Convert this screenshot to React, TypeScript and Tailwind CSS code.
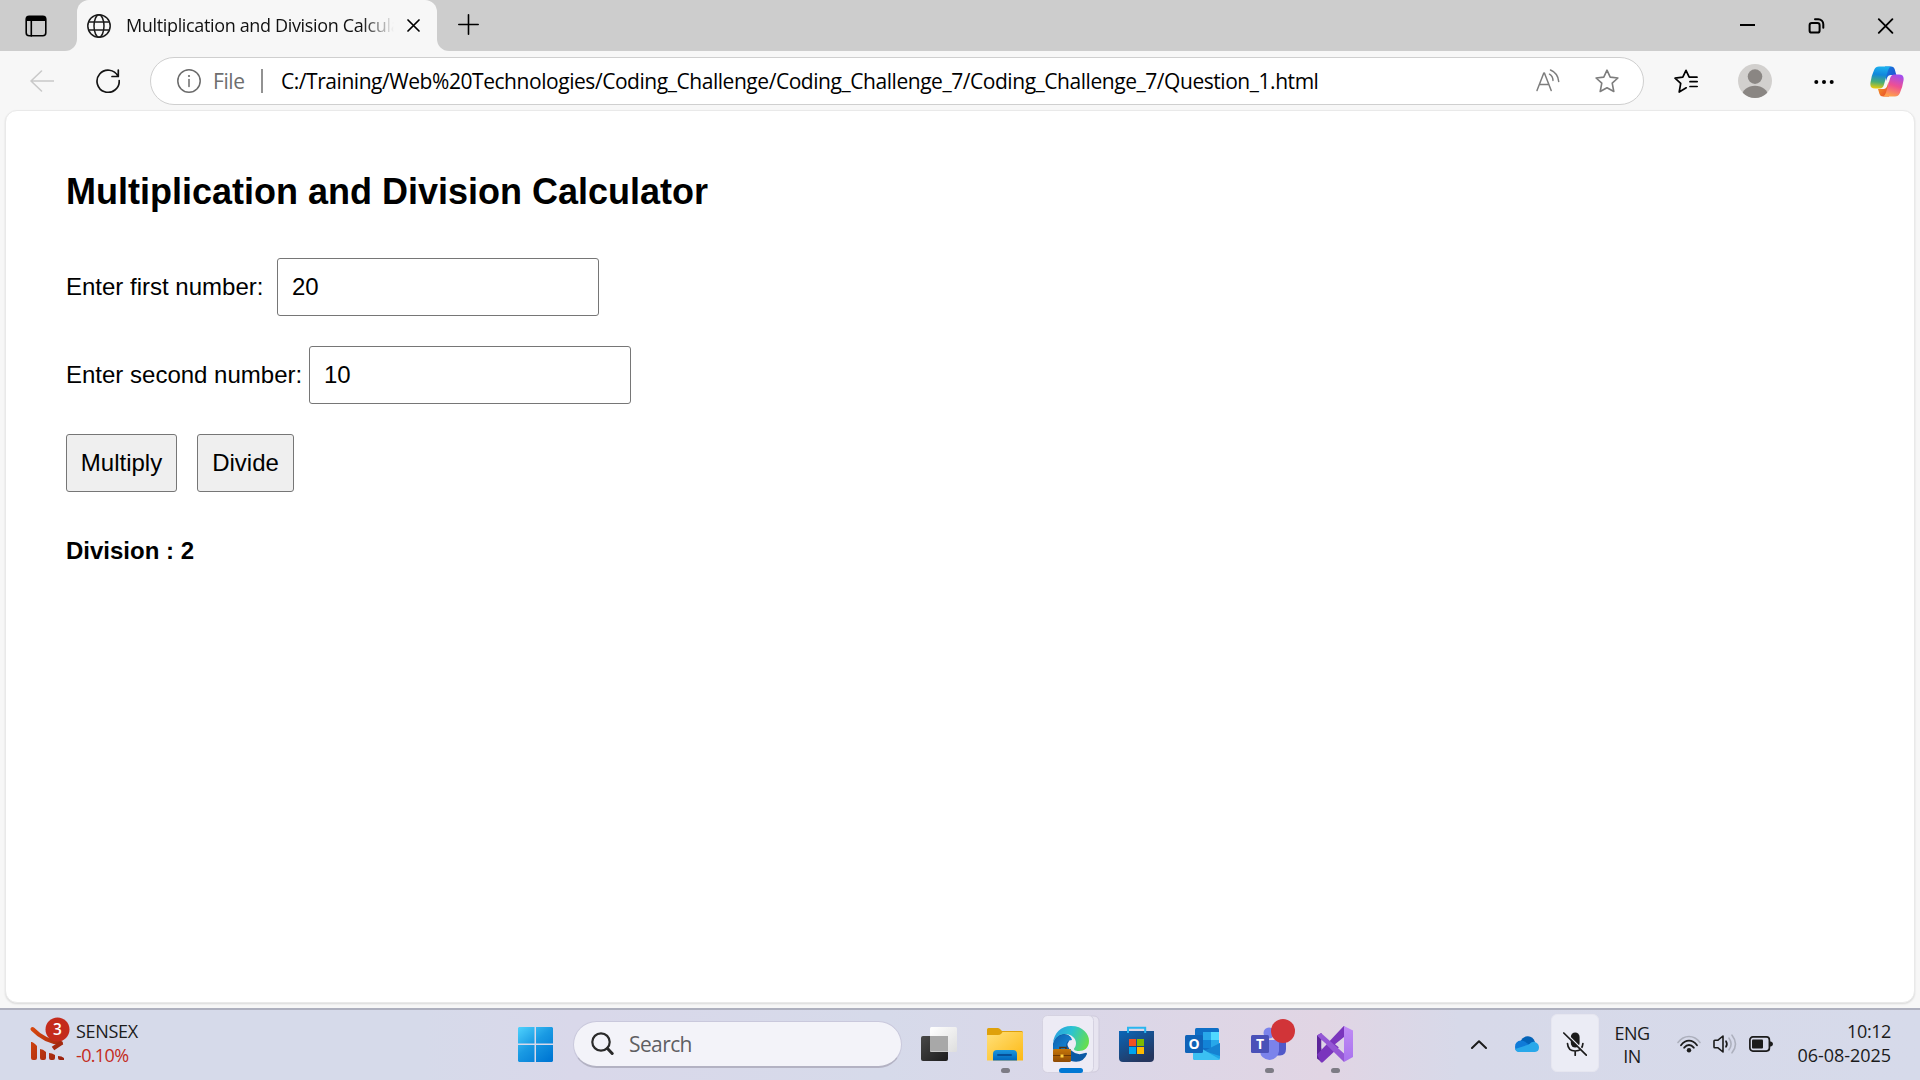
import type { ReactNode } from "react";

const ui = "font-['Open_Sans','Noto_Sans',sans-serif]";

type IconProps = { box: string; w: number; h: number; className?: string; children: ReactNode };

function Icon({ box, w, h, className = "", children }: IconProps) {
  return (
    <svg
      viewBox={box}
      width={w}
      height={h}
      className={`shrink-0 ${className}`}
      fill="none"
      stroke="currentColor"
      strokeLinecap="round"
      strokeLinejoin="round"
    >
      {children}
    </svg>
  );
}

function TabStrip() {
  return (
    <div className="flex h-[51px] shrink-0 bg-[#f7f7f7]">
      <div className="flex w-[77px] items-center rounded-br-xl bg-[#cdcdcd] pl-[25px]">
        <Icon box="0 0 22 22" w={22} h={22} className="text-black">
          <rect x="1.2" y="1.2" width="19.6" height="19.6" rx="3" strokeWidth="1.6" />
          <path d="M1 6V4a3 3 0 0 1 3-3h14a3 3 0 0 1 3 3v2z" fill="black" stroke="none" />
          <path d="M6.3 6v15" strokeWidth="1.6" />
        </Icon>
      </div>
      <div className="w-[360px] bg-[#cdcdcd]">
        <div className="flex h-[51px] items-center rounded-t-xl bg-[#f7f7f7] pl-[10px]">
          <Icon box="0 0 24 24" w={24} h={24} className="text-[#1b1b1b]">
            <g strokeWidth="1.5">
              <circle cx="12" cy="12" r="11.2" />
              <ellipse cx="12" cy="12" rx="5" ry="11.2" />
              <path d="M2 8h20M2 16h20" />
            </g>
          </Icon>
          <div className={`${ui} -mt-px ml-[15px] w-[268px] overflow-hidden bg-[linear-gradient(to_right,#111_88%,#f7f7f7)] bg-clip-text text-[18px] leading-6 tracking-[-0.35px] whitespace-nowrap text-transparent`}>
            Multiplication and Division Calculator
          </div>
          <Icon box="0 0 13 13" w={13} h={13} className="ml-[13px] text-black">
            <path d="M1 1l11 11M12 1L1 12" strokeWidth="1.7" />
          </Icon>
        </div>
      </div>
      <div className="flex flex-1 items-center rounded-bl-xl bg-[#cdcdcd] pl-[21px] text-black">
        <Icon box="0 0 21 21" w={21} h={21} className="-mt-0.5">
          <path d="M10.5.8v19.4M.8 10.5h19.4" strokeWidth="1.6" />
        </Icon>
        <div className="ml-auto flex items-center">
          <Icon box="0 0 69 40" w={69} h={40}>
            <path d="M27 19h15" strokeWidth="2" strokeLinecap="butt" />
          </Icon>
          <Icon box="0 0 69 40" w={69} h={40}>
            <rect x="27.6" y="17" width="10" height="9.6" rx="2.2" strokeWidth="2" />
            <path d="M33 13.2h3.3a5 5 0 0 1 5 5v3.6" strokeWidth="2" />
          </Icon>
          <Icon box="0 0 69 40" w={69} h={40}>
            <path d="M27.8 13.2l13.6 13.6M41.4 13.2L27.8 26.8" strokeWidth="1.9" />
          </Icon>
        </div>
      </div>
    </div>
  );
}

function Copilot() {
  return (
    <svg viewBox="0 0 34 31" width="34" height="31" className="shrink-0">
      <defs>
        <linearGradient id="cpa" x1="0.3" y1="0" x2="0.2" y2="1">
          <stop offset="0" stopColor="#1cb0ee" />
          <stop offset="0.35" stopColor="#1187dc" />
          <stop offset="0.7" stopColor="#4cae74" />
          <stop offset="1" stopColor="#f3cc05" />
        </linearGradient>
        <linearGradient id="cpb" x1="0.7" y1="0" x2="0.4" y2="1">
          <stop offset="0" stopColor="#a14df0" />
          <stop offset="0.5" stopColor="#ee4f94" />
          <stop offset="1" stopColor="#ffa24a" />
        </linearGradient>
        <linearGradient id="cpc" x1="0" y1="0" x2="1" y2="1">
          <stop offset="0" stopColor="#127fe0" />
          <stop offset="1" stopColor="#2348cc" />
        </linearGradient>
        <linearGradient id="cpd" x1="0" y1="0" x2="1" y2="1">
          <stop offset="0" stopColor="#f5a623" />
          <stop offset="1" stopColor="#e8432e" />
        </linearGradient>
      </defs>
      <path d="M15 .5h6q3 0 3.8 3L26.3 9H21q-3 0-4 3l-1 3z" fill="url(#cpc)" />
      <path d="M18.500 15.500L17.500 19q-1 4-4 4H8l1.500 5q.8 2.500 3.500 2.500h6z" fill="url(#cpd)" />
      <path d="M9 .5h12q-2 .5-3 4l-4 14q-1 4-4.500 4H5q-5.500 0-4.500-6Q1.600 9 4.200 3.700 5.700.5 9 .5z" fill="url(#cpa)" />
      <path d="M25 30.500H13q2-.5 3-4l4-14q1-4 4.500-4H29q5.500 0 4.500 6-1.100 7.500-3.700 12.800-1.500 3.200-4.800 3.200z" fill="url(#cpb)" />
    </svg>
  );
}

function Toolbar() {
  return (
    <div className="flex h-[60px] shrink-0 items-center bg-[#f7f7f7]">
      <Icon box="0 0 24 22" w={24} h={22} className="ml-[30px] text-[#c9c9c9]">
        <path d="M11.500 1L1 11l10.500 10M1 11h22.500" strokeWidth="1.6" />
      </Icon>
      <Icon box="0 0 24 24" w={24} h={24} className="ml-[42px] text-[#141414]">
        <path d="M22 7.200A11.100 11.100 0 1 0 23.200 11.500M22.300 1v6.500H16" strokeWidth="1.700" />
      </Icon>
      <div className="ml-[30px] flex h-12 w-[1494px] items-center rounded-full border border-[#cfcfcf] bg-white pl-[26px]">
        <Icon box="0 0 24 24" w={24} h={24} className="text-[#6b6b6b]">
          <circle cx="12" cy="12" r="11.200" strokeWidth="1.500" />
          <path d="M12 10.500v7" strokeWidth="1.500" />
          <circle cx="12" cy="7" r="1.100" fill="currentColor" stroke="none" />
        </Icon>
        <div className={`${ui} ml-[12px] w-[48px] text-[21px] leading-7 tracking-[-0.4px] text-[#6e6e6e]`}>File</div>
        <div className="h-6 w-0.5 bg-[#929292]" />
        <div className={`${ui} ml-[18px] w-[1255px] text-[21px] leading-7 tracking-[-0.45px] whitespace-nowrap text-black`}>
          C:/Training/Web%20Technologies/Coding_Challenge/Coding_Challenge_7/Coding_Challenge_7/Question_1.html
        </div>
        <Icon box="0 0 24 24" w={24} h={24} className="text-[#7d7d7d]">
          <g strokeWidth="1.500">
            <path d="M1 21.500L7.800 4h.6l6.800 17.500M3.500 15.500h9.200" />
            <path d="M13.500 5.200q3.300 2 3.500 6.200M14.500 1q7.500 3.200 8.200 11.500" />
          </g>
        </Icon>
        <Icon box="0 0 24 24" w={24} h={24} className="ml-[35px] text-[#7d7d7d]">
          <path d="M12 1.200l3.200 6.900 7.700.9-5.700 5.200 1.600 8.300L12 18.700l-6.800 3.800 1.600-8.300L1.100 9l7.700-.9z" strokeWidth="1.600" />
        </Icon>
      </div>
      <Icon box="0 0 24 24" w={24} h={24} className="ml-[30px] text-black">
        <path d="M12.200 18.800L5.200 23l1.500-8.600L1 9.200l7.800-1L12 1.300l3.200 6.900H23M16 12.700h7.200M16 17.500h7.200" strokeWidth="1.700" />
      </Icon>
      <svg viewBox="0 0 34 34" width="34" height="34" className="ml-10 shrink-0">
        <defs>
          <clipPath id="av"><circle cx="17" cy="17" r="17" /></clipPath>
        </defs>
        <circle cx="17" cy="17" r="17" fill="#d2d0ce" />
        <circle cx="17" cy="12.600" r="7.300" fill="#8a8683" />
        <ellipse cx="17" cy="32" rx="13" ry="10.200" fill="#8a8683" clipPath="url(#av)" />
      </svg>
      <svg viewBox="0 0 20 6" width="20" height="6" className="mt-px ml-[42px] shrink-0">
        <circle cx="2.300" cy="3" r="2" />
        <circle cx="10" cy="3" r="2" />
        <circle cx="17.700" cy="3" r="2" />
      </svg>
      <div className="ml-9">
        <Copilot />
      </div>
    </div>
  );
}

const field = "box-border h-[58px] w-[322px] rounded-[3px] border border-[#767676] bg-white px-[14px] text-[24px] text-black outline-none";
const button = "h-[58px] rounded-[3px] border border-[#767676] bg-[#efefef] text-center text-[24px] text-black";

function Calculator() {
  return (
    <div className="-mt-px flex grow flex-col bg-[#f7f7f7] px-[5px] pb-[5px]">
      <main className="grow rounded-xl border border-[#e9e9e9] bg-white px-[60px] pt-[60px] font-['Liberation_Sans',sans-serif] text-[24px] leading-7 text-black shadow-[0_1px_2px_rgba(0,0,0,0.12)]">
        <h2 className="h-[42px] text-[36px] leading-[42px] font-bold whitespace-nowrap">
          Multiplication and Division Calculator
        </h2>
        <div className="mt-[45px] flex h-[58px] items-center">
          <label className="w-[211px] whitespace-nowrap">Enter first number:</label>
          <input className={field} defaultValue="20" />
        </div>
        <div className="mt-[30px] flex h-[58px] items-center">
          <label className="w-[243px] whitespace-nowrap">Enter second number:</label>
          <input className={field} defaultValue="10" />
        </div>
        <div className="mt-[30px] flex gap-5">
          <button className={`${button} w-[111px]`}>Multiply</button>
          <button className={`${button} w-[97px]`}>Divide</button>
        </div>
        <p className="mt-[45px] font-bold">Division : 2</p>
      </main>
    </div>
  );
}

/* Dock icons share one screen-space grid: 66px columns beginning at x=906. */
function DockIcons() {
  return (
    <div className="flex h-[70px] shrink-0 self-start">
      <svg viewBox="906 1010 66 70" className="h-[70px] w-[66px] shrink-0">
        <defs>
          <linearGradient id="tva" x1="0" y1="0" x2="1" y2="1"><stop stopColor="#484848" /><stop offset="1" stopColor="#1c1c1c" /></linearGradient>
          <linearGradient id="tvb" x1="0" y1="0" x2="1" y2="1"><stop stopColor="#fff" /><stop offset="1" stopColor="#dedede" /></linearGradient>
        </defs>
        <rect x="921" y="1036" width="27" height="25" rx="2" fill="url(#tva)" />
        <rect x="930" y="1027" width="27" height="25" rx="1.500" fill="url(#tvb)" />
        <path d="M930 1036h18v15.500h-17l-1-1z" fill="#a8a8a8" />
      </svg>
      <svg viewBox="972 1010 66 70" className="h-[70px] w-[66px] shrink-0">
        <defs>
          <linearGradient id="fea" x1="0" y1="0" x2="1" y2="1"><stop stopColor="#ffe07a" /><stop offset="1" stopColor="#fdb913" /></linearGradient>
          <linearGradient id="feb" x1="0" y1="0" x2="0" y2="1"><stop stopColor="#1c96dd" /><stop offset="1" stopColor="#0067bd" /></linearGradient>
        </defs>
        <path d="M987 1038v-8.500q0-1.500 1.500-1.500h9q1.500 0 2.500 1l2 2h19.500q1.500 0 1.500 1.500v6z" fill="#dfa10a" />
        <path d="M987 1035h11q2 0 3.500-1.500l1-1.500H1022q1 0 1 1v27.500h-36z" fill="url(#fea)" />
        <path d="M993 1060.500v-6.500q0-4 4-4h16q4 0 4 4v6.500z" fill="url(#feb)" />
        <rect x="997" y="1054" width="15" height="2" rx="1" fill="#064f97" />
        <rect x="1001" y="1068" width="9" height="5" rx="2.500" fill="#7d7c85" />
      </svg>
      <svg viewBox="1038 1010 66 70" className="h-[70px] w-[66px] shrink-0">
        <defs>
          <linearGradient id="ega" x1="0" y1="0.300" x2="1" y2="0.600"><stop stopColor="#2b9fe0" /><stop offset="0.450" stopColor="#2bc3d2" /><stop offset="1" stopColor="#67df4c" /></linearGradient>
          <linearGradient id="egb" x1="0" y1="0" x2="0.800" y2="1"><stop stopColor="#0f5fae" /><stop offset="1" stopColor="#1695e2" /></linearGradient>
          <linearGradient id="egc" x1="0" y1="0" x2="0" y2="1"><stop stopColor="#c67508" /><stop offset="1" stopColor="#8f4b05" /></linearGradient>
        </defs>
        <rect x="1050" y="1016" width="49" height="56" rx="5" fill="#e7e4f0" stroke="#cfcbdc" />
        <rect x="1042.500" y="1015.500" width="51" height="57" rx="5" fill="#edebf5" stroke="#d5d2e1" />
        <path d="M1053 1044v5h18v12q12 3 16-7 0-2-2-1-8 3-13-2-7-5-3-10 3-8-7-7-7 1-9 10z" fill="#0c59a4" />
        <path d="M1053 1046q1-9 9-11 9-1 10 5-6 0-6 6 0 4 3 8l1 7q-17 1-17-15z" fill="url(#egb)" />
        <path d="M1053 1043c1-10 8-17 18-17 12 0 18 8 18 15 0 7-5 10-10 10-4 0-5-1-5-2 0-1 2-2 2-6 0-5-5-9-11-9-6 0-10 4-12 9z" fill="url(#ega)" />
        <path d="M1060 1049v-1.500h6v1.500" stroke="#53300e" strokeWidth="1.500" fill="none" />
        <rect x="1053" y="1049" width="18" height="13" rx="1.500" fill="url(#egc)" />
        <path d="M1053 1055.500h18" stroke="#6e3804" strokeWidth="1" />
        <rect x="1060.500" y="1054.500" width="3" height="3" fill="#ffcf3c" />
        <rect x="1059" y="1068" width="24" height="5" rx="2.500" fill="#0078d4" />
      </svg>
      <svg viewBox="1104 1010 66 70" className="h-[70px] w-[66px] shrink-0">
        <defs>
          <linearGradient id="sta" x1="0" y1="0" x2="0.600" y2="1"><stop stopColor="#0a66b8" /><stop offset="1" stopColor="#25365e" /></linearGradient>
        </defs>
        <path d="M1119 1031h35v27q0 4-4 4h-27q-4 0-4-4z" fill="url(#sta)" />
        <path d="M1128 1033v-5.200h17.200v5.200" stroke="#29b6f0" strokeWidth="2" fill="none" />
        <path d="M1129 1039h7v7h-7z" fill="#f25022" />
        <path d="M1137 1039h7v7h-7z" fill="#7fba00" />
        <path d="M1129 1047h7v7h-7z" fill="#00a4ef" />
        <path d="M1137 1047h7v7h-7z" fill="#ffb900" />
      </svg>
      <svg viewBox="1170 1010 66 70" className="h-[70px] w-[66px] shrink-0">
        <rect x="1195" y="1028" width="24" height="24" rx="1.500" fill="#0f6fc6" />
        <path d="M1203 1032h8v8h-8z" fill="#28a8ea" />
        <path d="M1211 1032h8v8h-8z" fill="#50d9ff" />
        <path d="M1203 1040h8v8h-8z" fill="#1283d6" />
        <path d="M1211 1040h8v8h-8z" fill="#28a8ea" />
        <path d="M1193 1045l13 7 14-9v15q0 2-2 2h-23q-2 0-2-2z" fill="#1fa6e8" />
        <path d="M1204 1051l16-8v13z" fill="#1683d2" />
        <path d="M1199 1047l21 12.500q-1 .5-2 .5h-23q-2 0-2-2v-5z" fill="#3bc0f2" />
        <rect x="1185" y="1035" width="18" height="18" rx="1.500" fill="#0f63b8" />
        <text x="1194" y="1049" textAnchor="middle" fontFamily="Open Sans" fontSize="14" fontWeight="700" fill="#fff">O</text>
      </svg>
      <svg viewBox="1236 1010 66 70" className="h-[70px] w-[66px] shrink-0">
        <circle cx="1269" cy="1033" r="5.500" fill="#7b83eb" />
        <path d="M1273 1040h13v9q0 6-6 6.500h-7z" fill="#5059c9" />
        <path d="M1260 1040h19v11q-1 8-9.500 9-9-1-9.500-9z" fill="#7b83eb" />
        <rect x="1251" y="1035" width="18" height="18" rx="1.500" fill="#4a51b8" />
        <text x="1260" y="1049" textAnchor="middle" fontFamily="Open Sans" fontSize="14" fontWeight="700" fill="#fff">T</text>
        <circle cx="1283" cy="1031" r="12" fill="#d13438" />
        <rect x="1265" y="1068" width="9" height="5" rx="2.500" fill="#7d7c85" />
      </svg>
      <svg viewBox="1302 1010 66 70" className="h-[70px] w-[66px] shrink-0">
        <defs>
          <linearGradient id="vsa" x1="0" y1="0" x2="0" y2="1"><stop stopColor="#c08cf5" /><stop offset="1" stopColor="#a972ee" /></linearGradient>
        </defs>
        <path d="M1317 1035.500l4.500-2.500v29l-4.500-3.500z" fill="#5c2499" />
        <path d="M1317 1054.500l4 8h1.500l22-20.500v-16l-1 .2z" fill="#7a35bd" />
        <path d="M1317 1035.500l4-2.500 23 20.500v8.500z" fill="#9457d5" />
        <path d="M1344 1026l9 4.500v26.500l-9 5z" fill="url(#vsa)" />
        <path d="M1321.500 1040v8.500l5-4.200zM1344 1037v14.500l-9-7.200z" fill="#ddd4e6" />
        <rect x="1331" y="1068" width="9" height="5" rx="2.500" fill="#7d7c85" />
      </svg>
    </div>
  );
}

function Taskbar() {
  return (
    <div className={`${ui} flex h-[72px] shrink-0 items-center border-t-2 border-[#aeb0be] bg-[linear-gradient(to_right,#d6daea_0%,#d6daea_22%,#d9d8ea_30%,#d6daea_46%,#dad7e8_56%,#e1d5e4_69%,#d7d9e9_76%,#d6daea_100%)] pb-0.5`}>
      <svg viewBox="28 1010 44 70" className="ml-7 h-[70px] w-11 shrink-0 self-start">
        <defs>
          <linearGradient id="sx" gradientUnits="userSpaceOnUse" x1="30" y1="1030" x2="64" y2="1055"><stop stopColor="#d8480f" /><stop offset="1" stopColor="#9c2410" /></linearGradient>
        </defs>
        <path d="M32.500 1029q12 12.500 28.500 14" stroke="url(#sx)" strokeWidth="4" strokeLinecap="round" fill="none" />
        <path d="M53 1048.500l9-6" stroke="#a32a10" strokeWidth="4.500" />
        <path d="M31 1042q2-.5 6 4v12q0 2-2 2h-2q-2 0-2-2zM40 1049q3 0 6 3v6q0 2-2 2h-2q-2 0-2-2zM49 1053q3 0 6 2v3q0 2-2 2h-2q-2 0-2-2zM58 1056q4 0 6 2v2h-4q-2 0-2-2z" fill="url(#sx)" />
        <circle cx="57.500" cy="1029.500" r="12" fill="#c42b1c" />
        <text x="57.500" y="1035" textAnchor="middle" fontFamily="Open Sans" fontSize="15.500" fontWeight="600" fill="#fff">3</text>
      </svg>
      <div className="-mt-0.5 ml-1 w-[442px] text-[18px] leading-6 text-[#1b1b1b]">
        <div className="tracking-[-0.3px]">SENSEX</div>
        <div className="tracking-[-0.65px] text-[#c42b1c]">-0.10%</div>
      </div>
      <svg viewBox="0 0 35 35" className="h-[35px] w-[35px] shrink-0">
        <defs>
          <linearGradient id="wn" gradientUnits="userSpaceOnUse" x1="0" y1="0" x2="28" y2="35"><stop stopColor="#4fd2fd" /><stop offset="0.500" stopColor="#1a9ae3" /><stop offset="1" stopColor="#0078d4" /></linearGradient>
        </defs>
        <path d="M1 0h15.500v16.500H0V1zM18 0h16l1 1v15.500H18zM0 18h16.500v17H1l-1-1zM18 18h17v16l-1 1H18z" fill="url(#wn)" />
      </svg>
      <div className="mr-[4px] ml-[20px] flex h-[47px] w-[329px] items-center rounded-full border border-b-2 border-[#c9c8dc] border-b-[#b3b2c3] bg-[#f3f3f9] pl-[17px]">
        <Icon box="0 0 23 24" w={23} h={24} className="text-[#2a2a2a]">
          <circle cx="10" cy="10" r="8.700" strokeWidth="2.200" />
          <path d="M16.500 16.500l4.700 5" strokeWidth="3" />
        </Icon>
        <span className="ml-[15px] text-[21px] leading-7 tracking-[-0.6px] text-[#5f5f63]">Search</span>
      </div>
      <DockIcons />
      <Icon box="0 0 16 9" w={16} h={9} className="ml-[103px] text-[#1b1b1b]">
        <path d="M1 8l7-6.800L15 8" strokeWidth="2" />
      </Icon>
      <svg viewBox="0 0 24 16" className="ml-7 h-4 w-6 shrink-0">
        <path d="M5 6Q8 0 13 0.300 18 .6 20 6l-9 4z" fill="#0363b8" />
        <path d="M0 11Q0 5 6 4.500q3 0 5 2l9 6-16 3.500Q0 15 0 11z" fill="#0f7bd8" />
        <path d="M14 8.500q3-4 7-2 3 1.500 3 5 0 4-4 4.500H4q-3 0-4-3z" fill="#28a8ea" />
      </svg>
      <div className="-mt-0.5 ml-3 flex h-[58px] w-12 items-center justify-center rounded-md border border-[#e6e6f0] bg-[#ebecf5]">
        <Icon box="0 0 24 24" w={24} h={24} className="mt-0.5 text-[#1b1b1b]">
          <rect x="7.800" y="0.500" width="8.800" height="15" rx="4.400" fill="currentColor" stroke="none" />
          <path d="M4.500 11.500q.5 7.500 7.700 7.500t7.700-7.500M12.200 19v4.300" strokeWidth="1.700" />
          <path d="M1.800 0l23 23" stroke="#ebecf5" strokeWidth="1.500" />
          <path d="M.8 1l22.500 22.200" strokeWidth="1.700" />
        </Icon>
      </div>
      <div className="mt-0.5 ml-[13px] w-10 text-center text-[18px] leading-[23px] tracking-[-0.5px] text-[#1b1b1b]">
        <div>ENG</div>
        <div>IN</div>
      </div>
      <Icon box="0 0 24 18" w={24} h={18} className="ml-[25px] text-[#1b1b1b]">
        <path d="M1 7.500Q5.500 1.500 12 1.500T23 7.500" stroke="#adb0bd" strokeWidth="1.600" />
        <path d="M4 10.200Q7.500 5.700 12 5.700t8 4.500M7.200 12.700Q9.500 10 12 10t4.800 2.700" strokeWidth="1.800" />
        <circle cx="12" cy="15.200" r="2.200" fill="currentColor" stroke="none" />
      </Icon>
      <Icon box="0 0 24 20" w={24} h={20} className="ml-3 text-[#1b1b1b]">
        <path d="M1 7v6q0 .8.8.8H5l5 4.200V2L5 6.200H1.800Q1 6.200 1 7z" strokeWidth="1.600" />
        <path d="M13 7.200q1.800 2.800 0 5.600" strokeWidth="1.700" />
        <path d="M16 4.200q4.200 5.800 0 11.600M19 1.200q7 8.800 0 17.600" stroke="#adb0bd" strokeWidth="1.600" />
      </Icon>
      <Icon box="0 0 24 16" w={24} h={16} className="ml-3 text-[#1b1b1b]">
        <rect x="0.900" y="0.900" width="19.500" height="14.200" rx="3" strokeWidth="1.700" />
        <rect x="3" y="3.500" width="11" height="9" rx="1" fill="currentColor" stroke="none" />
        <path d="M20.800 5.500h1.200q2 .8 2 2.500t-2 2.500h-1.200z" fill="currentColor" stroke="none" />
      </Icon>
      <div className="-mt-0.5 ml-auto pr-[29px] text-right text-[18px] leading-6 text-[#1b1b1b]">
        <div className="tracking-[-0.4px]">10:12</div>
        <div className="tracking-[-0.05px]">06-08-2025</div>
      </div>
    </div>
  );
}

export default function App() {
  return (
    <div className="flex h-[1080px] w-[1920px] flex-col overflow-hidden bg-[#f7f7f7]">
      <TabStrip />
      <Toolbar />
      <Calculator />
      <Taskbar />
    </div>
  );
}
